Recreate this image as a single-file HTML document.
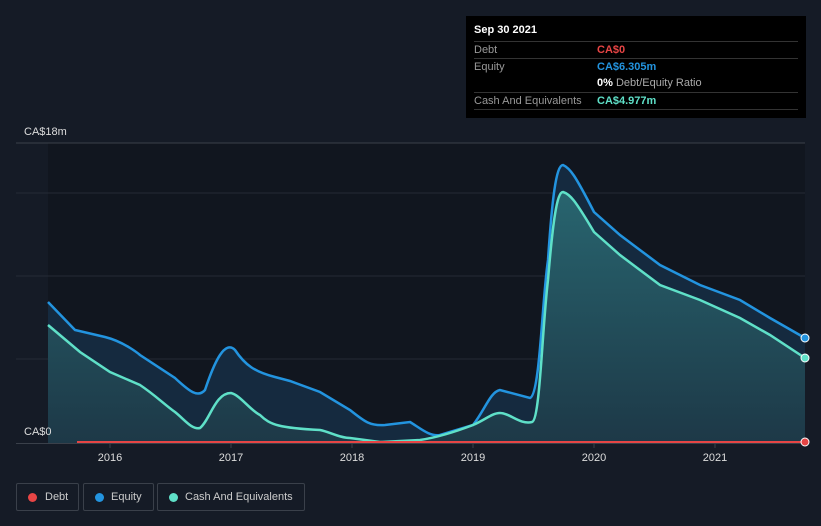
<!DOCTYPE html>
<html><head><style>
body{margin:0;width:821px;height:526px;background:#151b26;font-family:"Liberation Sans",sans-serif;overflow:hidden;position:relative}
.tip{position:absolute;left:466px;top:16px;width:340px;height:102px;background:#000;color:#fff;font-size:11px}
.row{position:absolute;left:8px;width:324px;border-top:1px solid #333;height:16px;line-height:17px}
.l{position:absolute;left:0;color:#999}.v{position:absolute;left:123px;font-weight:bold}
.leg{position:absolute;top:483px;height:26px;border:1px solid #3a404a;border-radius:2px;color:#ccc;font-size:11px;line-height:26px}
.dot{position:absolute;left:11px;top:9px;width:9px;height:9px;border-radius:50%}
</style></head><body>
<svg width="821" height="526" style="position:absolute;left:0;top:0">
<defs><linearGradient id="g" x1="0" y1="0" x2="0" y2="1"><stop offset="0" stop-color="#2a6b74"/><stop offset="1" stop-color="#1e3a48"/></linearGradient></defs>
<rect x="48" y="143" width="757" height="300" fill="#11161f"/>
<line x1="16" y1="143" x2="805" y2="143" stroke="#3a404a"/>
<line x1="16" y1="193" x2="805" y2="193" stroke="#252b35"/>
<line x1="16" y1="276" x2="805" y2="276" stroke="#252b35"/>
<line x1="16" y1="359" x2="805" y2="359" stroke="#252b35"/>
<path d="M48,302 L75,330 105,337 C125,342 140,355 140,355 L175,378 C190,392 198,398 205,390 C215,360 225,340 235,350 C245,365 255,372 275,377 L290,381 320,392 350,410 C365,422 370,426 385,425 L410,422 C420,428 430,437 440,435 L473,425 C485,410 490,392 500,390 L530,398 C540,395 542,300 548,260 C552,200 556,165 563,165 C570,168 575,175 594,212 L620,235 660,265 700,285 740,300 770,318 805,338 L805,443 L48,443Z" fill="#152a3f"/>
<path d="M48,325 L80,352 110,372 140,385 C155,395 165,405 175,412 C185,420 192,430 200,428 C210,420 215,393 231,393 C240,395 250,410 260,415 C270,425 280,428 320,430 C330,432 340,438 350,438 L380,442 420,440 C440,437 460,430 473,425 C485,420 492,413 500,413 C510,413 520,425 532,422 C540,420 542,330 548,280 C553,220 557,192 563,192 C570,194 575,200 594,232 L620,255 660,285 700,300 740,318 770,335 805,358 L805,443 L48,443Z" fill="url(#g)" opacity="0.9"/>
<path d="M48,302 L75,330 105,337 C125,342 140,355 140,355 L175,378 C190,392 198,398 205,390 C215,360 225,340 235,350 C245,365 255,372 275,377 L290,381 320,392 350,410 C365,422 370,426 385,425 L410,422 C420,428 430,437 440,435 L473,425 C485,410 490,392 500,390 L530,398 C540,395 542,300 548,260 C552,200 556,165 563,165 C570,168 575,175 594,212 L620,235 660,265 700,285 740,300 770,318 805,338" fill="none" stroke="#2394df" stroke-width="2.5"/>
<path d="M48,325 L80,352 110,372 140,385 C155,395 165,405 175,412 C185,420 192,430 200,428 C210,420 215,393 231,393 C240,395 250,410 260,415 C270,425 280,428 320,430 C330,432 340,438 350,438 L380,442 420,440 C440,437 460,430 473,425 C485,420 492,413 500,413 C510,413 520,425 532,422 C540,420 542,330 548,280 C553,220 557,192 563,192 C570,194 575,200 594,232 L620,255 660,285 700,300 740,318 770,335 805,358" fill="none" stroke="#5fe0c8" stroke-width="2.5"/>
<line x1="16" y1="443.5" x2="805" y2="443.5" stroke="#3a404a"/>
<line x1="77" y1="442" x2="805" y2="442" stroke="#e64545" stroke-width="2"/>
<circle cx="805" cy="338" r="4" fill="#2394df" stroke="#fff" stroke-width="1"/>
<circle cx="805" cy="358" r="4" fill="#5fe0c8" stroke="#fff" stroke-width="1"/>
<circle cx="805" cy="442" r="4" fill="#e64545" stroke="#fff" stroke-width="1"/>
<g stroke="#3a404a"><line x1="110" y1="443" x2="110" y2="448"/><line x1="231" y1="443" x2="231" y2="448"/><line x1="352" y1="443" x2="352" y2="448"/><line x1="473" y1="443" x2="473" y2="448"/><line x1="594" y1="443" x2="594" y2="448"/><line x1="715" y1="443" x2="715" y2="448"/></g>
<g fill="#ddd" font-size="11" text-anchor="middle" font-family="Liberation Sans"><text x="110" y="461">2016</text><text x="231" y="461">2017</text><text x="352" y="461">2018</text><text x="473" y="461">2019</text><text x="594" y="461">2020</text><text x="715" y="461">2021</text></g>
<text x="24" y="135" fill="#ddd" font-size="11" font-family="Liberation Sans">CA$18m</text>
<text x="24" y="435" fill="#ddd" font-size="11" font-family="Liberation Sans">CA$0</text>
</svg>
<div class="tip">
<div style="position:absolute;left:8px;top:8px;font-weight:bold">Sep 30 2021</div>
<div class="row" style="top:25px"><span class="l">Debt</span><span class="v" style="color:#e84545">CA$0</span></div>
<div class="row" style="top:42px"><span class="l">Equity</span><span class="v" style="color:#2394df">CA$6.305m</span></div>
<div class="row" style="top:59px;border-top:none"><span class="v" style="color:#fff">0% <span style="color:#aaa;font-weight:normal">Debt/Equity Ratio</span></span></div>
<div class="row" style="top:76px;border-bottom:1px solid #333"><span class="l">Cash And Equivalents</span><span class="v" style="color:#5fe0c8">CA$4.977m</span></div>
</div>
<div class="leg" style="left:16px;width:61px"><span class="dot" style="background:#e84545"></span><span style="position:absolute;left:28px">Debt</span></div>
<div class="leg" style="left:83px;width:69px"><span class="dot" style="background:#2394df"></span><span style="position:absolute;left:27px">Equity</span></div>
<div class="leg" style="left:157px;width:146px"><span class="dot" style="background:#5fe0c8"></span><span style="position:absolute;left:27px">Cash And Equivalents</span></div>
</body></html>
